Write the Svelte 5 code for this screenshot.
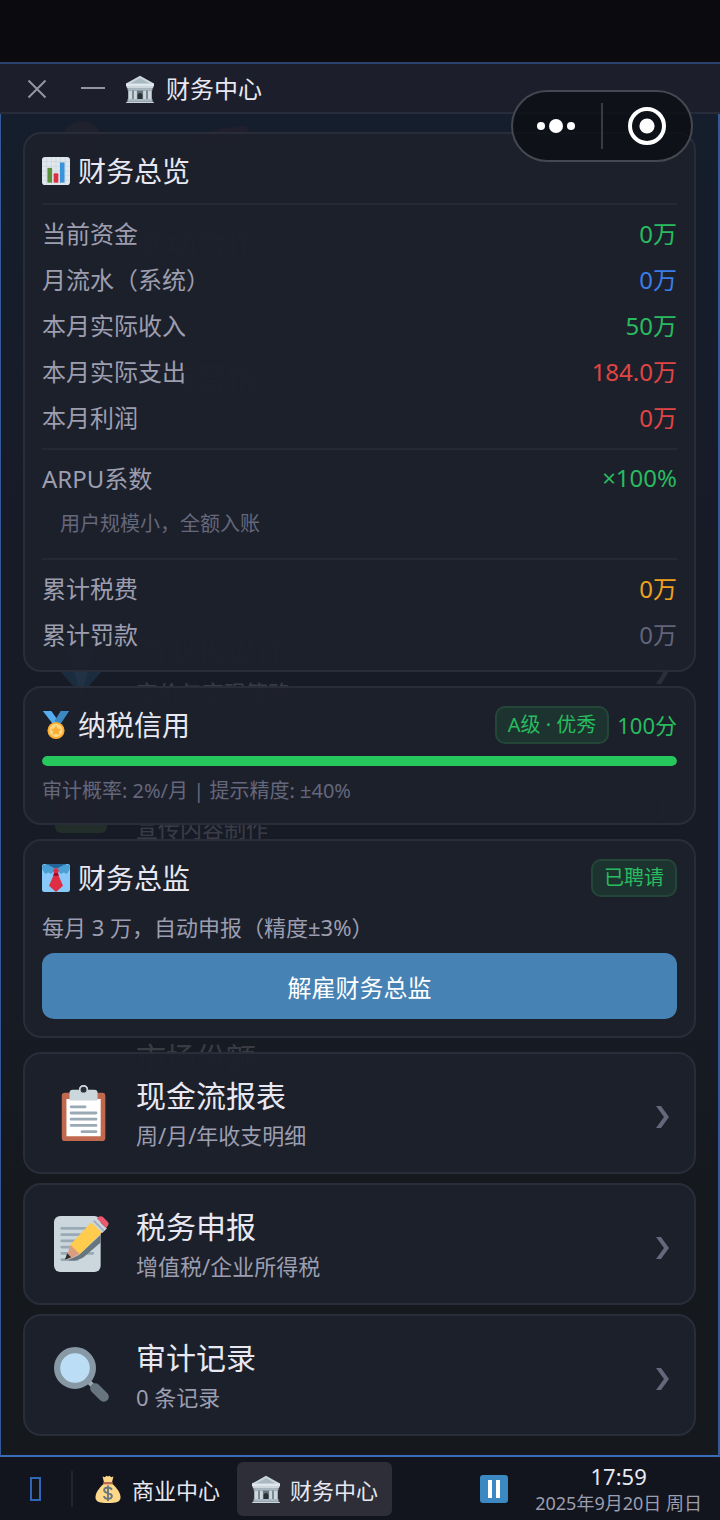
<script lang="ts">
  const overview = [
    { label: '当前资金', value: '0万', tone: 'green' },
    { label: '月流水（系统）', value: '0万', tone: 'blue' },
    { label: '本月实际收入', value: '50万', tone: 'green' },
    { label: '本月实际支出', value: '184.0万', tone: 'red' },
    { label: '本月利润', value: '0万', tone: 'red' },
  ];
  const totals = [
    { label: '累计税费', value: '0万', tone: 'amber' },
    { label: '累计罚款', value: '0万', tone: 'muted' },
  ];
  const entries = [
    { icon: 'clipboard', title: '现金流报表', sub: '周/月/年收支明细' },
    { icon: 'memo', title: '税务申报', sub: '增值税/企业所得税' },
    { icon: 'lens', title: '审计记录', sub: '0 条记录' },
  ];
  const behind = [
    { title: '联动合作', sub: '', icon: '' },
    { title: '广告营销', sub: '', icon: '' },
    { title: '', sub: '', icon: '' },
    { title: '商业化设计', sub: '定价与变现策略', icon: 'gem' },
    { title: '', sub: '宣传内容制作', icon: 'book' },
    { title: '', sub: '', icon: '' },
    { title: '市场份额', sub: '', icon: '' },
  ];
  const credit = 100;
</script>

{#snippet bank()}
  <svg class="emoji" viewBox="0 0 36 36" aria-hidden="true">
    <path fill="#66757f" d="M3 16h30v18H3z" />
    <path fill="#ccd6dd" d="M2 34h32a2 2 0 0 1 2 2H0a2 2 0 0 1 2-2z" />
    <path fill="#292f33" d="M18 23a3 3 0 0 0-3 3v6h6v-6a3 3 0 0 0-3-3z" />
    <g fill="#ccd6dd"><path d="M3 20h5v12H3zM10 20h4v12h-4zM22 20h4v12h-4zM28 20h5v12h-5z" /></g>
    <path fill="#aab8c2" d="M2 17h32v3H2zM2 31h32v3H2z" />
    <path fill="#ccd6dd" d="M18 1 36 11v3a1 1 0 0 1-1 1v2H1v-2a1 1 0 0 1-1-1v-3z" />
    <path fill="#aab8c2" d="M18 4 32 12H4z" />
    <path fill="#e1e8ed" d="M0 11h36v3H0z" />
  </svg>
{/snippet}

<div class="screen">
  <header class="titlebar">
    <button class="win" aria-label="关闭">
      <svg width="20" height="20" viewBox="0 0 20 20"><path d="M1.500 1.500 18.500 18.500M18.500 1.500 1.500 18.500" /></svg>
    </button>
    <button class="win" aria-label="最小化">
      <svg width="24" height="20" viewBox="0 0 24 20"><path d="M0 9H24" /></svg>
    </button>
    <h1>{@render bank()}财务中心</h1>
  </header>

  <div class="capsule">
    <button aria-label="更多">
      <svg width="40" height="16" viewBox="0 0 40 16" fill="#fff"><circle cx="4" cy="8" r="4" /><circle cx="19" cy="8" r="7" /><circle cx="34" cy="8" r="4" /></svg>
    </button>
    <button aria-label="退出">
      <svg width="38" height="38" viewBox="0 0 38 38"><circle cx="19" cy="19" r="17" fill="none" stroke="#fff" stroke-width="4" /><circle cx="19" cy="19" r="7.600" fill="#fff" /></svg>
    </button>
  </div>

  <main>
    <div class="behind" aria-hidden="true">
      <div class="ghost first">
        <svg viewBox="0 0 56 56"><circle cx="29" cy="15" r="20" fill="#a0444c" /><path fill="#a0344c" d="M138 12q30-12 55-12l6 18h-62z" /></svg>
      </div>
      {#each behind as row}
        <div class="ghost">
          <svg viewBox="0 0 56 56">
            {#if row.icon === 'gem'}
              <path fill="#3b88c3" d="M14 8h28l14 14-28 32L0 22z" /><path fill="#5dadec" d="M14 8h28l-5 14H19zM19 22h18l-9 32z" />
            {:else if row.icon === 'book'}
              <rect x="2" y="4" width="52" height="52" rx="6" fill="#5c913b" />
            {/if}
          </svg>
          <div><b>{row.title}</b><span>{row.sub}</span></div>
          {#if row.icon}
            <svg class="arrow" viewBox="0 0 14 22"><path d="M1 0h5l7 11-7 11H1l7-11z" /></svg>
          {/if}
        </div>
      {/each}
    </div>

    <section class="card overview">
      <h2>
        <svg class="emoji" viewBox="0 0 36 36" aria-hidden="true">
          <rect width="36" height="36" rx="4" fill="#e1e8ed" />
          <path stroke="#ccd6dd" stroke-width="1" d="M6 0v36M12 0v36M18 0v36M24 0v36M30 0v36M0 6h36M0 12h36M0 18h36M0 24h36M0 30h36" />
          <path fill="#5c913b" d="M7 14h6v19H7z" /><path fill="#dd2e44" d="M15 21h6v12h-6z" /><path fill="#3b94d9" d="M23 7h6v26h-6z" />
        </svg>财务总览
      </h2>
      <dl class="rule">
        {#each overview as row}
          <div><dt>{row.label}</dt><dd class={row.tone}>{row.value}</dd></div>
        {/each}
      </dl>
      <dl class="rule arpu">
        <div><dt>ARPU系数</dt><dd class="green">×100%</dd></div>
      </dl>
      <p class="note">用户规模小，全额入账</p>
      <dl class="rule">
        {#each totals as row}
          <div><dt>{row.label}</dt><dd class={row.tone}>{row.value}</dd></div>
        {/each}
      </dl>
    </section>

    <section class="card">
      <div class="head">
        <h2>
          <svg class="emoji" viewBox="0 0 36 36" aria-hidden="true">
            <path fill="#55acee" d="M1 0h11l10 14-7 4z" /><path fill="#3b88c3" d="M24 0h11L23 18l-7-5z" />
            <circle cx="18" cy="25" r="11" fill="#ffac33" /><circle cx="18" cy="25" r="8.500" fill="#ffd983" />
            <path fill="#ffac33" d="m18 18 2.100 4.500 5 .6-3.700 3.300 1 4.900-4.400-2.500-4.400 2.500 1-4.900-3.700-3.300 5-.6z" />
          </svg>纳税信用
        </h2>
        <div class="status"><span class="badge">A级 · 优秀</span><strong class="green">{credit}分</strong></div>
      </div>
      <div class="bar" role="progressbar" aria-label="纳税信用" aria-valuenow={credit} aria-valuemin="0" aria-valuemax="100">
        <div style="width: {credit}%"></div>
      </div>
      <p class="hint">审计概率: 2%/月 | 提示精度: ±40%</p>
    </section>

    <section class="card">
      <div class="head">
        <h2>
          <svg class="emoji" viewBox="0 0 36 36" aria-hidden="true">
            <rect width="36" height="36" rx="3" fill="#88c9f9" />
            <path fill="#226699" d="M4 0h28l-9 5H13z" />
            <path fill="#4a9fd4" d="M1 1h7l9 5-5 7-4-2-4 2L0 6zM35 1h-7l-9 5 5 7 4-2 4 2 4-7z" />
            <path fill="#dd2e44" d="M18 5c2 0 3.500 2 3.500 4l-1 4L27 28l-9 8-9-8 6.500-15-1-4c0-2 1.500-4 3.500-4z" />
            <path fill="#a0041e" d="M15.500 12h5l1 3h-7z" />
          </svg>财务总监
        </h2>
        <span class="badge">已聘请</span>
      </div>
      <p class="desc">每月 3 万，自动申报（精度±3%）</p>
      <button class="primary">解雇财务总监</button>
    </section>

    <nav class="links">
      {#each entries as e}
        <button class="card link">
          {#if e.icon === 'clipboard'}
            <svg viewBox="0 0 36 36" aria-hidden="true">
              <rect x="5" y="5" width="28" height="31" rx="2" fill="#c1694f" /><path fill="#fff" d="M8 9h22v24H8z" />
              <path fill="#ccd6dd" d="M16 3a3 3 0 0 1 6 0h4a2 2 0 0 1 2 2v5H10V5a2 2 0 0 1 2-2z" />
              <circle cx="19" cy="3" r="2.400" fill="#292f33" stroke="#ccd6dd" />
              <path stroke="#99aab5" stroke-width="1.800" stroke-linecap="round" d="M11 14h9M11 18h16M11 22h16M11 26h16M18 30h9" />
            </svg>
          {:else if e.icon === 'memo'}
            <svg viewBox="0 0 36 36" aria-hidden="true">
              <rect y="0" width="30" height="36" rx="4" fill="#ccd6dd" />
              <path stroke="#99aab5" stroke-width="1.800" stroke-linecap="round" d="M5 8h17M5 12h17M5 16h12M5 20h9M5 24h20M5 28h10" />
              <path fill="#66757f" d="M9 28.500 16 25 30 12v5L19 26.500c-3 2-7 2.500-10 2z" />
              <path fill="#ffcc4d" d="M24 4 31 10.500 16 25l-6-6z" />
              <path fill="#d99e82" d="m10.500 18.500 6 6-7 3.500-1.500-1z" /><path fill="#292f33" d="m8.500 24 2.500 2.500-4 1.700z" />
              <path fill="#ccd6dd" d="m24 4 3-2.500 7 6.500-3 3z" /><path stroke="#99aab5" d="m25.500 3 6.500 6.500" />
              <path fill="#ea596e" d="M27.500 1.500c2-2 3-1.500 4-.8l3 3c1 1 .8 2-1 4z" />
            </svg>
          {:else}
            <svg viewBox="0 0 36 36" aria-hidden="true">
              <path stroke="#9aaab4" stroke-width="3" d="m21 21 5 5" />
              <path stroke="#66757f" stroke-width="6.500" stroke-linecap="round" d="m26.500 26.500 5.500 5.500" />
              <circle cx="13.500" cy="13.500" r="11.500" fill="#bbddf5" stroke="#8899a6" stroke-width="4" />
            </svg>
          {/if}
          <span class="text"><b>{e.title}</b><span>{e.sub}</span></span>
          <svg class="arrow" viewBox="0 0 14 22" aria-hidden="true"><path d="M0 0h5l8 11-8 11H0l8-11z" /></svg>
        </button>
      {/each}
    </nav>
  </main>

  <footer>
    <button class="start" aria-label="开始"><i></i></button>
    <button class="task">
      <svg class="emoji" viewBox="0 0 36 36" aria-hidden="true">
        <path fill="#fdd888" d="M11 2l3 1 2-2 2 1 2-1 2 2 3-1-2 8h-10z" />
        <path fill="#fdd888" d="M13 11h10c6 5 12 13 11 19-1 5-5 6-16 6S3 35 2 30c-1-6 5-14 11-19z" />
        <path fill="#bf6952" d="M12 9h12v3H12z" />
        <path fill="none" stroke="#67757f" stroke-width="2.400" d="M23 19c-1-2-3-3-5-3-3 0-5 1-5 3.500 0 5 10 2.500 10 7.500 0 2.500-2 3.500-5 3.500s-5-1-5-3.500M18 13.500v20" />
      </svg>商业中心
    </button>
    <button class="task active">{@render bank()}财务中心</button>
    <button class="pause" aria-label="暂停">
      <svg width="28" height="28" viewBox="0 0 28 28"><rect width="28" height="28" rx="3" fill="#3b88c3" /><path fill="#fff" d="M8 5h4v18H8zM16 5h4v18h-4z" /></svg>
    </button>
    <div class="clock"><time>17:59</time><span>2025年9月20日 周日</span></div>
  </footer>
</div>

<style>
  :global(body) { margin: 0; background: #0a0a0f; }
  * { box-sizing: border-box; }
  .screen {
    position: relative; display: flex; flex-direction: column; min-height: 100vh;
    padding-top: 62px; color: #e8e8f2; background: #0a0a0f;
    font-family: "Noto Sans", "Noto Sans CJK SC", sans-serif; font-size: 24px; font-weight: 400;
  }
  button { font: inherit; color: inherit; background: none; border: 0; padding: 0; }
  h1, h2, p, dl, dd { margin: 0; font-weight: 400; }
  .emoji { width: 28px; height: 28px; flex: none; }
  .titlebar {
    display: flex; align-items: center; height: 52px; padding: 1px 27px 0; gap: 34px;
    background: #1c1f2b; border-top: 2px solid #2b4170; border-bottom: 2px solid #262c3a;
  }
  .win { display: flex; }
  .win svg { fill: none; stroke: #9395a5; stroke-width: 2; }
  h1 { display: flex; align-items: center; gap: 12px; margin-left: -13px; font-size: 24px; line-height: 36px; }
  .capsule {
    position: absolute; z-index: 2; top: 90px; right: 27px; width: 182px; height: 72px;
    display: flex; align-items: center; border: 2px solid #454850; border-radius: 36px; background: rgba(11, 14, 19, 0.8);
  }
  .capsule button { flex: 1; display: flex; justify-content: center; align-items: center; height: 46px; }
  .capsule button + button { border-left: 2px solid #383b43; }
  main {
    position: relative; flex: 1; padding: 18px 22px; overflow: hidden;
    border: solid #35589a; border-width: 0 2px 2px 1px; border-bottom-color: #3c6cb8;
    background: linear-gradient(#151e2c, #171b27 30%, #171b25 65%, #15191e 80%, #15191d);
    display: flex; flex-direction: column; gap: 14px;
  }
  .behind { position: absolute; inset: 0; padding: 0 49px 0 52px; opacity: 0.16; overflow: hidden; }
  .ghost { display: flex; align-items: center; height: 136px; }
  .ghost.first { height: 79px; opacity: 0.5; }
  .ghost svg { flex: none; width: 56px; height: 56px; overflow: visible; }
  .ghost div { flex: 1; display: flex; flex-direction: column; gap: 10px; padding-left: 27px; }
  .ghost b { font-size: 30px; line-height: 36px; min-height: 36px; font-weight: 400; }
  .ghost span { font-size: 22px; line-height: 28px; min-height: 28px; }
  .ghost .arrow { height: 22px; width: 14px; margin-top: 8px; fill: #9395a5; }
  .card {
    position: relative; padding: 18px 17px 17px; border: 2px solid #292d39; border-radius: 18px;
    background: rgba(29, 32, 44, 0.96);
  }
  h2 { display: flex; align-items: center; gap: 8px; font-size: 28px; line-height: 38px; }
  .overview { padding-bottom: 5px; }
  .overview h2 { padding-bottom: 13px; }
  .rule { border-top: 2px solid #252934; padding: 4px 0 9px; }
  .rule div { display: flex; justify-content: space-between; align-items: center; height: 46px; }
  .arpu { padding-bottom: 0; }
  dt { color: #9c9eb0; }
  .green { color: #28bb5f; }
  .blue { color: #3b7de8; }
  .red { color: #e04545; }
  .amber { color: #f0a020; }
  .muted { color: #62647a; }
  .note { padding: 8px 18px 18px; font-size: 20px; line-height: 32px; color: #65677b; }
  .head { display: flex; align-items: center; justify-content: space-between; }
  .status { display: flex; align-items: center; gap: 8px; }
  .status strong { font-size: 22px; line-height: 36px; font-weight: 400; }
  .badge {
    padding: 0 11px; font-size: 20px; line-height: 34px; color: #28bb5f;
    background: #1d332f; border: 2px solid #234638; border-radius: 10px;
  }
  .bar { height: 10px; margin-top: 12px; border-radius: 5px; background: #2a2e3a; overflow: hidden; }
  .bar div { height: 100%; background: #26c75c; border-radius: 5px; }
  .hint { margin-top: 10px; font-size: 20px; line-height: 30px; color: #65677b; }
  .desc { margin: 14px 0 10px; font-size: 22px; line-height: 32px; color: #9c9eb0; }
  .primary { display: block; width: 100%; height: 66px; border-radius: 12px; background: #4682b4; color: #fff; }
  .links { display: flex; flex-direction: column; gap: 9px; }
  .link { display: flex; align-items: center; height: 122px; padding: 0 24px 0 29px; text-align: left; }
  .link > svg { width: 56px; height: 56px; flex: none; }
  .text { flex: 1; display: flex; flex-direction: column; padding-left: 26px; }
  .text b { font-size: 30px; line-height: 44px; font-weight: 400; }
  .text span { font-size: 22px; line-height: 34px; color: #9c9eb0; }
  .link > .arrow { width: 14px; height: 22px; margin-top: 8px; fill: #65677b; }
  footer { display: flex; align-items: center; height: 63px; padding: 0 18px 0 0; background: #12151d; font-size: 22px; }
  .start { width: 73px; height: 36px; border-right: 2px solid #22252d; display: flex; align-items: center; justify-content: center; }
  .start i { width: 11px; height: 24px; border: 2px solid #2f66b8; }
  .task { display: flex; align-items: center; gap: 10px; height: 54px; padding: 0 14px 0 15px; margin-left: 6px; border-radius: 6px; }
  .task.active { margin-left: 3px; background: #2d2e37; }
  .pause { display: flex; margin-left: auto; }
  .clock { display: flex; flex-direction: column; align-items: center; margin-left: 27px; line-height: 28px; }
  .clock span { font-size: 18px; color: #9c9eb0; line-height: 26px; }
</style>
